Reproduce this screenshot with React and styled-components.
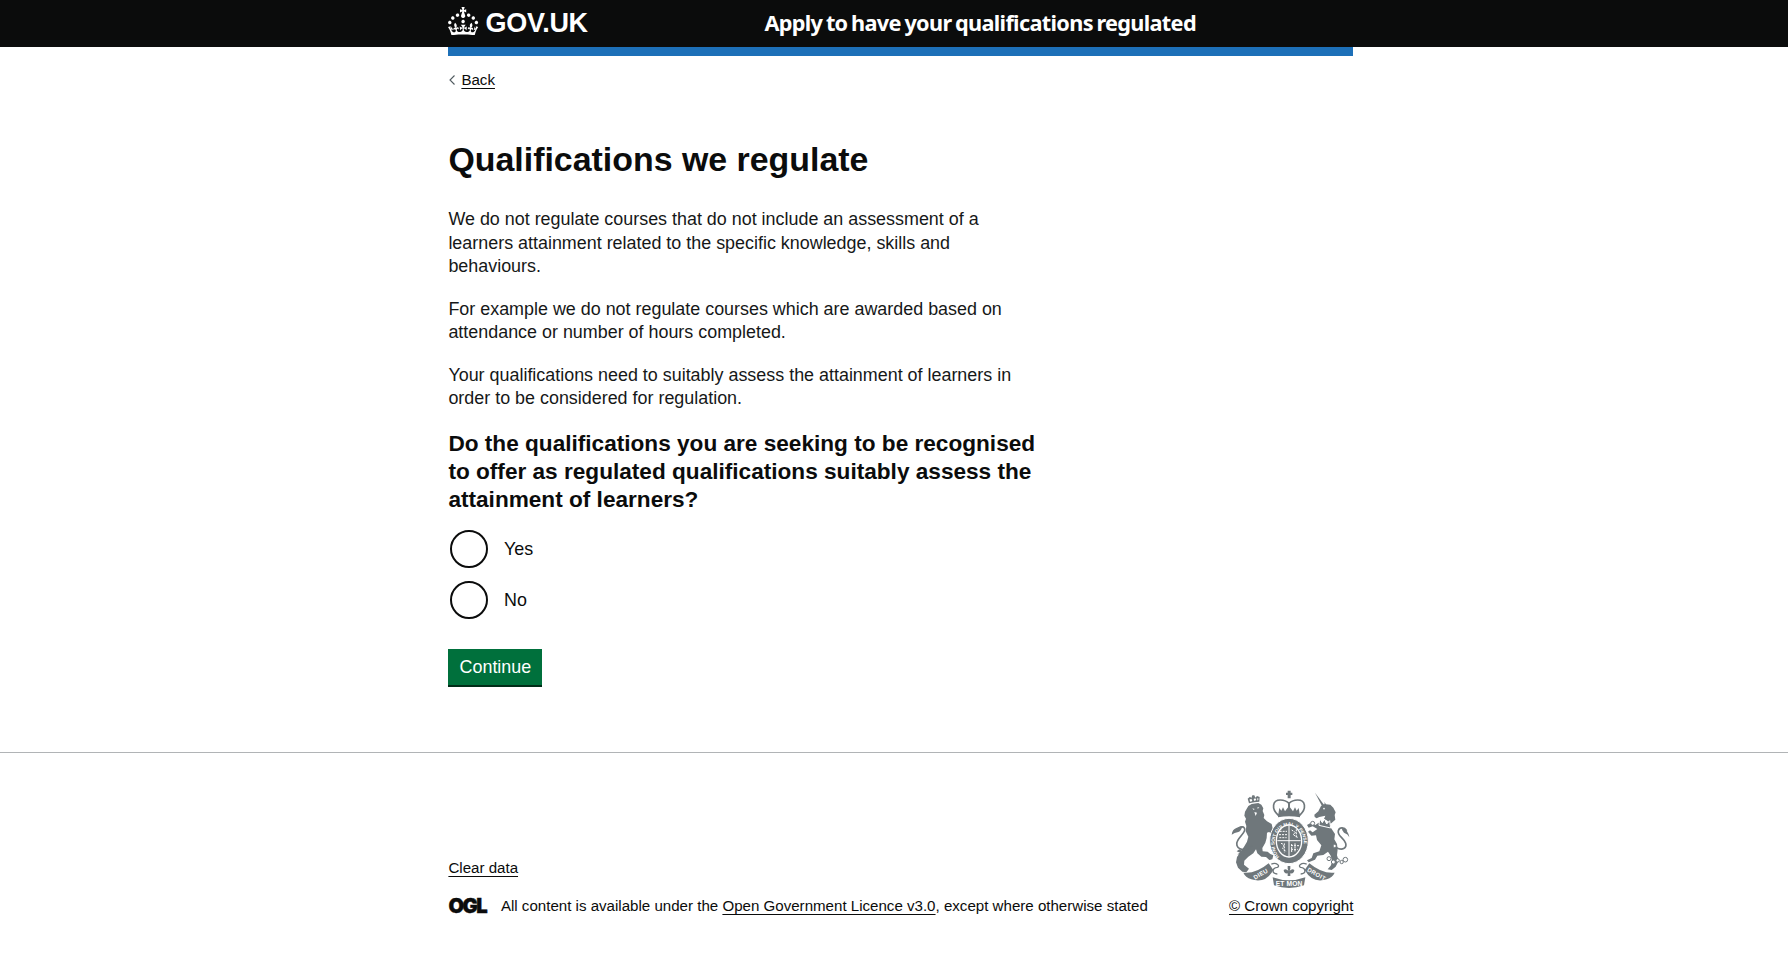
import React from 'react';
import styled, { createGlobalStyle } from 'styled-components';

const Global = createGlobalStyle`
  * { box-sizing: border-box; }
  body { margin: 0; background: #fff; color: #0b0c0c; font-family: "Liberation Sans", Arial, sans-serif; }
  h1, h2, p { margin: 0; padding: 0; border: 0; }
`;

const Container = styled.div`
  width: 905px;
  margin: 0 0 0 calc(50% - 445.6px);
`;

const Header = styled.header`
  height: 47px;
  background: #0b0c0c;
  color: #fff;
`;

const HeaderRow = styled(Container)`
  display: flex;
  height: 47px;
`;

const Logo = styled.a`
  display: flex;
  width: 316px;
  padding-top: 7px;
  gap: 7px;
  svg { flex: none; }
`;

const LogoText = styled.span`
  font-size: 27px;
  line-height: 32px;
  font-weight: 700;
  letter-spacing: -0.3px;
`;

const ServiceName = styled.span`
  font-family: "Noto Sans", sans-serif;
  font-weight: 700;
  font-size: 21.7px;
  line-height: 45px;
  letter-spacing: -0.67px;
  word-spacing: -1.4px;
  white-space: nowrap;
`;

const BlueBar = styled(Container)`
  height: 9.4px;
  background: #1d70b8;
`;

const Link = styled.a`
  color: #0b0c0c;
  text-decoration: underline;
  text-decoration-thickness: 1px;
  text-underline-offset: 2.6px;
`;

const BackRow = styled.div`
  display: flex;
  align-items: center;
  gap: 5px;
  margin-top: 14px;
  height: 19px;
  font-size: 15.1px;
  line-height: 19px;
`;

const Title = styled.h1`
  margin-top: 47px;
  font-size: 33.9px;
  line-height: 46px;
`;

const Paragraph = styled.p`
  width: 590px;
  color: #161818;
  font-size: 17.91px;
  line-height: 23.6px;
  margin-bottom: 18.8px;
`;

const Body = styled.div`
  margin-top: 25.6px;
`;

const Legend = styled.h2`
  font-size: 22.62px;
  line-height: 28.3px;
`;

const Radios = styled.div`
  display: flex;
  flex-direction: column;
  gap: 13.3px;
  margin: 15.6px 0 30px 1.8px;
`;

const Radio = styled.label`
  display: flex;
  align-items: center;
  gap: 16px;
  font-size: 17.9px;
  line-height: 24px;
`;

const Circle = styled.span`
  width: 37.8px;
  height: 37.8px;
  border: 2px solid #0b0c0c;
  border-radius: 50%;
`;

const Button = styled.button`
  display: block;
  width: 94px;
  height: 36px;
  padding: 1px 0 0;
  border: 0;
  background: #00703c;
  box-shadow: 0 2px 0 #002d18;
  color: #fff;
  font-family: inherit;
  font-size: 17.9px;
  line-height: 35px;
`;

const Footer = styled.footer`
  margin-top: 67.4px;
  border-top: 1px solid #b1b4b6;
`;

const FooterRow = styled(Container)`
  display: flex;
  justify-content: space-between;
  padding-top: 36.7px;
  font-size: 15.1px;
  line-height: 19px;
`;

const Meta = styled.div`
  display: flex;
  flex-direction: column;
  justify-content: flex-end;
  gap: 19px;
`;

const Licence = styled.div`
  display: flex;
  white-space: nowrap;
`;

const Ogl = styled.span`
  width: 52.5px;
  font-family: Inter, sans-serif;
  font-weight: 900;
  font-size: 20.2px;
  letter-spacing: -1.5px;
  -webkit-text-stroke: 0.4px #0b0c0c;
`;

const Copyright = styled.div`
  display: flex;
  flex-direction: column;
  align-items: center;
  gap: 7px;
`;

function Crown() {
  return (
    <svg width="30.2" height="28.3" viewBox="0 0 32 30" fill="#fff">
      <path d="M22.6 10.4c-1 .4-2-.1-2.4-1-.4-.9.1-2 1-2.4.9-.4 2 .1 2.4 1s-.1 2-1 2.4m-5.9 6.7c-.9.4-2-.1-2.4-1-.4-.9.1-2 1-2.4.9-.4 2 .1 2.4 1s-.1 2-1 2.4m10.8-3.7c-1 .4-2-.1-2.4-1-.4-.9.1-2 1-2.4.9-.4 2 .1 2.4 1s0 2-1 2.4m3.3 4.8c-1 .4-2-.1-2.4-1-.4-.9.1-2 1-2.4.9-.4 2 .1 2.4 1s-.1 2-1 2.4M17 4.7l2.3 1.2V2.5l-2.3.7-.2-.2.9-3h-3.4l.9 3-.2.2c-.1.1-2.3-.7-2.3-.7v3.4L15 4.7c.1.1.1.2.2.2l-1.3 4c-.1.2-.1.4-.1.6 0 1.1.8 2 1.9 2.2h.7c1-.2 1.9-1.1 1.9-2.1 0-.2 0-.4-.1-.6l-1.3-4c-.1-.2 0-.2.1-.3m-7.6 5.7c.9.4 2-.1 2.4-1 .4-.9-.1-2-1-2.4-.9-.4-2 .1-2.4 1s0 2 1 2.4m-5 3c.9.4 2-.1 2.4-1 .4-.9-.1-2-1-2.4-.9-.4-2 .1-2.4 1s.1 2 1 2.4m-3.2 4.8c.9.4 2-.1 2.4-1 .4-.9-.1-2-1-2.4-.9-.4-2 .1-2.4 1s0 2 1 2.4m14.8 11c4.4 0 8.600.3 12.3.8 1.1-4.5 2.4-7 3.7-8.8l-2.5-.9c.2 1.3.3 1.9 0 2.7-.4-.4-.8-1.1-1.1-2.3l-1.2 4c.7-.5 1.3-.8 2-.9-1.1 2.5-2.6 3.1-3.5 3-1.1-.2-1.7-1.2-1.5-2.1.3-1.2 1.5-1.5 2.1-.1 1.1-2.3-.8-3-2-2.3 1.9-1.9 2.1-3.5.6-5.6-2.1 1.6-2.1 3.2-1.2 5.5-1.2-1.4-3.2-.6-2.5 1.6.9-1.4 2.1-.5 1.9.8-.2 1.1-1.7 2.1-3.5 1.9-2.7-.2-2.9-2.1-2.9-3.6.7-.1 1.9.5 2.9 1.9l.4-4.3c-1.1 1.1-2.1 1.4-3.2 1.4.4-1.2 2.1-3 2.1-3h-5.4s1.7 1.900 2.1 3c-1.1 0-2.1-.2-3.2-1.4l.4 4.3c1-1.4 2.2-2 2.9-1.9-.1 1.5-.2 3.4-2.9 3.6-1.9.2-3.4-.8-3.5-1.9-.2-1.3 1-2.2 1.9-.8.7-2.3-1.2-3-2.5-1.6.9-2.2.9-3.9-1.2-5.5-1.5 2-1.3 3.7.6 5.600-1.2-.7-3.1 0-2 2.3.6-1.4 1.8-1.1 2.1.1.2.9-.3 1.9-1.5 2.1-.9.2-2.4-.5-3.5-3 .6 0 1.2.3 2 .9l-1.2-4c-.3 1.1-.7 1.9-1.1 2.3-.3-.8-.2-1.4 0-2.7l-2.9.9C1.3 23 2.6 25.5 3.7 30c3.7-.5 7.9-.8 12.3-.8" />
    </svg>
  );
}

function Crest() {
  const g = '#6f777b';
  return (
    <svg width="119.500" height="98.7" viewBox="66 30 358.500 296" fill={g} stroke="none">
      {/* central crown */}
      <path d="M236 32h9v6h5v7h-5v10h-9V45h-5v-7h5z" />
      <path d="M208 106C186 86 190 60 214 60q16 0 26 10q10-10 26-10c24 0 28 26 6 46" fill="none" stroke={g} strokeWidth="5" />
      <path d="M237 66h6v36h-6zM208 102l3-18 6 8 5-10 6 12 12-16 12 16 6-12 5 10 6-8 3 18z" />
      <path d="M207 102q33-8 66 0v10q-33-7-66 0z" />

      {/* lion with its crown */}
      <g transform="translate(54 18)">
        <path d="M66 52l-4-14 7-6 4 4 3-8h6l3 7 5-5 8 3-1 14-15 2z" />
        <path d="M67 41l6-3 3 6-5 4zM80 39l5-2 3 5-6 3zM90 37l5 1-3 6z" fill="#fff" />
        <path d="M64 60l10-6 20-3 9 5 6 11-2 8 5 12-2 9 10 10 14 8 4 18-2 12-10-6-6 2-1 16-4 14-9 16 1 10 15 1 8 7 9 4-3 12-9 2-10-9-14-1-12-10-4-12-8 12-15 10-12 12-1 12 15 12-8 11-12-2-13-12-6-16 3-16 10-14 12-18 8-14 4-15-8-16 2-16-4-13 3-9-5-9 2-12z" />
        <path d="M76 67l7 2-3 3zM90 65l7-2-4 5zM82 78l8 2-4 10z" fill="#fff" />
        <path d="M76 178C48 204 20 184 32 164C38 150 60 136 52 126C46 118 36 126 28 134" fill="none" stroke={g} strokeWidth="5" />
        <path d="M14 146q2-16 14-20 12-6 18-6-2 14-12 18-12 2-20 8z" />
        <path d="M52 198l-15-8-8 6 10 4-8 5 18 3z" />
      </g>

      {/* unicorn with its chain */}
      <g transform="translate(234 18)">
        <path d="M84 20l28 38-6 4z" />
        <path d="M112 48l5 7 13 1 9 9 7 14-3 8 2 14-14 12-12-10-8-4 4-10-18 4-8 4-6-4-1-7 12-10 8-16 11-6z" />
        <circle cx="111" cy="68" r="2.500" fill="#fff" />
        <path d="M95 110l36 8 1 8 12 18-2 16 8 14 2 16-2 18 5 16-9 18-12 10-12-2 9-11 5-12-5-18-8-12-14 10-18 2-7 12-19 8-5-6 14-7 5-14 18-6 6-18-13-16-3-14-14 1-10-12 6-4 8 6 14-10-14-8-12 4-5-8 9-5 16 5z" />
        <path d="M96 118l2-20 8 12 6-11 7 15 9-10 3 22z" stroke="#fff" strokeWidth="3" />
        <path d="M147 184C166 196 180 186 176 172C170 154 150 150 154 134C158 122 172 124 179 134" fill="none" stroke={g} strokeWidth="5" />
        <path d="M187 154q-4-10-16-14-8-8-6-14 18 4 22 28z" />
        <g fill="#fff" stroke={g} strokeWidth="3">
          <circle cx="126" cy="218" r="6" /><circle cx="139" cy="228" r="6" /><circle cx="152" cy="223" r="5" />
          <circle cx="164" cy="228" r="5" /><circle cx="175" cy="221" r="7" /><circle cx="77" cy="112" r="6" /><circle cx="143" cy="180" r="5" />
        </g>
      </g>

      {/* garter and shield */}
      <ellipse cx="240" cy="183" rx="58" ry="68" stroke="#fff" strokeWidth="3" />
      <ellipse cx="240" cy="183" rx="40" ry="50" fill="#fff" />
      <ellipse cx="240" cy="183" rx="36" ry="46" />
      <path id="garter" d="M213 233A44 54 0 1 1 268 233" fill="none" />
      <text fontFamily="Liberation Sans" fontWeight="700" fontSize="14" fill="#fff">
        <textPath href="#garter" startOffset="3">HONI SOIT QUI MAL Y PENSE</textPath>
      </text>
      <g fill="none" stroke="#fff" strokeWidth="3">
        <path d="M240 138v91M205 182h70" strokeWidth="3" />
        <path d="M212 154h22M210 164h24M211 173h22M248 150l12 8-8 6 14 8M262 148v24M216 190q14 4 4 14l10 10M226 190v28M248 192v26M258 190v24M246 197h26M246 208h20" strokeDasharray="6 3" />
      </g>

      {/* motto ribbon */}
      <path d="M103 278q38 4 76-28l14 20q-24 42-66 28-18-6-24-20z" />
      <path d="M377 278q-38 4-76-28l-14 20q24 42 66 28 18-6 24-20z" />
      <path d="M191 292q49 18 98 0l-4 24q-45 16-90 0z" />
      <path d="M187 252c16-6 28 6 18 10-16 2-18 20 0 20M293 252c-16-6-28 6-18 10 16 2 18 20 0 20" fill="none" stroke={g} strokeWidth="4" />
      <path d="M236 258h8v8l-2 6q8-8 14-2-1 12-12 10v8h-8v-8q-11 2-12-10 6-6 14 2l-2-6z" />
      <g fontFamily="Liberation Sans" fontWeight="700" fontSize="18" fill="#fff">
        <text transform="translate(138 299) rotate(-30)" textLength="46">DIEU</text>
        <text x="200" y="317" fontSize="20" textLength="80">ET MON</text>
        <text transform="translate(293 273) rotate(29)" textLength="60">DROIT</text>
      </g>
    </svg>
  );
}

export default function App() {
  return (
    <>
      <Global />
      <Header>
        <HeaderRow>
          <Logo><Crown /><LogoText>GOV.UK</LogoText></Logo>
          <ServiceName>Apply to have your qualifications regulated</ServiceName>
        </HeaderRow>
      </Header>
      <BlueBar />
      <Container as="main">
        <BackRow>
          <svg width="8" height="12" viewBox="0 0 8 12" fill="none" stroke="#505a5f" strokeWidth="1.1"><path d="M6.5 1.5 2 6l4.5 4.5" /></svg>
          <Link>Back</Link>
        </BackRow>
        <Title>Qualifications we regulate</Title>
        <Body>
          <Paragraph>We do not regulate courses that do not include an assessment of a<br />learners attainment related to the specific knowledge, skills and<br />behaviours.</Paragraph>
          <Paragraph>For example we do not regulate courses which are awarded based on<br />attendance or number of hours completed.</Paragraph>
          <Paragraph>Your qualifications need to suitably assess the attainment of learners in<br />order to be considered for regulation.</Paragraph>
        </Body>
        <Legend>Do the qualifications you are seeking to be recognised<br />to offer as regulated qualifications suitably assess the<br />attainment of learners?</Legend>
        <Radios>
          <Radio><Circle />Yes</Radio>
          <Radio><Circle />No</Radio>
        </Radios>
        <Button>Continue</Button>
      </Container>
      <Footer>
        <FooterRow>
          <Meta>
            <div><Link>Clear data</Link></div>
            <Licence>
              <Ogl>OGL</Ogl>
              <span>All content is available under the <Link>Open Government Licence v3.0</Link>, except where otherwise stated</span>
            </Licence>
          </Meta>
          <Copyright>
            <Crest />
            <Link>© Crown copyright</Link>
          </Copyright>
        </FooterRow>
      </Footer>
    </>
  );
}
